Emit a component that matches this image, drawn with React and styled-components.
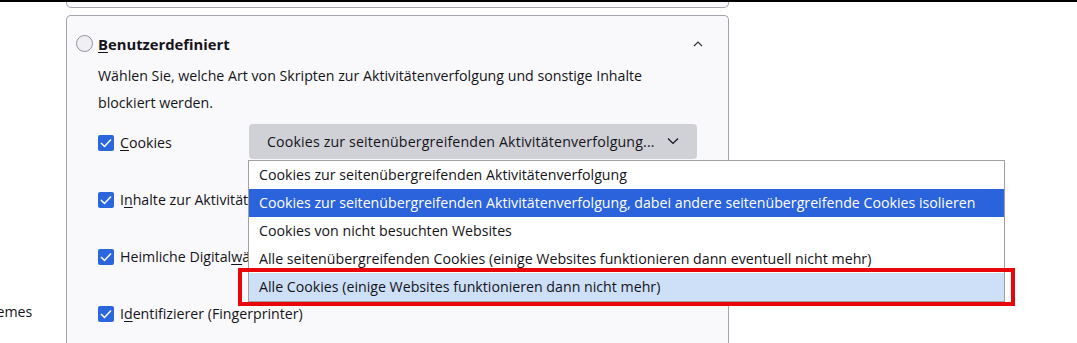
import React from 'react'
import styled, { createGlobalStyle } from 'styled-components'

const GlobalStyle = createGlobalStyle`
  html, body {
    margin: 0;
    padding: 0;
    background: #ffffff;
    overflow: hidden;
  }
  body {
    font-family: "Open Sans", "Noto Sans", sans-serif;
    color: #15141a;
    font-size: 14.2px;
  }
`

const Page = styled.div`
  width: 1077px;
  height: 343px;
  border-top: 2px solid #000;
  box-sizing: border-box;
  display: flex;
  overflow: hidden;
`

const Sidebar = styled.div`
  width: 66px;
  flex-shrink: 0;
  display: flex;
  flex-direction: column;
  justify-content: flex-end;
  padding-bottom: 21px;
  box-sizing: border-box;
`

const SideItem = styled.div`
  margin-left: -20px;
  white-space: nowrap;
  line-height: 20px;
`

const Main = styled.div`
  width: 663px;
  display: flex;
  flex-direction: column;
  gap: 7px;
`

const PrevCard = styled.div`
  height: 6px;
  border: 1px solid #a3a3ad;
  border-top: none;
  border-radius: 0 0 5px 5px;
  background: #f9f9fb;
`

const Card = styled.div`
  border: 1px solid #a3a3ad;
  border-bottom: none;
  border-radius: 5px 5px 0 0;
  background: #f9f9fb;
  padding: 16px 10px 0 9px;
  height: 400px;
`

const Header = styled.div`
  display: flex;
  align-items: center;
  height: 24px;
`

const Radio = styled.span`
  width: 15px;
  height: 15px;
  border-radius: 50%;
  border: 1px solid #8f8f9d;
  background: #f0f0f4;
  margin-right: 5px;
`

const Title = styled.div`
  flex: 1;
  font-weight: 700;
  font-size: 14.8px;
`

const Chevron = styled.svg`
  width: 12px;
  height: 12px;
  margin-right: 14px;
`

const Body = styled.div`
  padding-left: 22px;
`

const Description = styled.p`
  margin: 6px 0 0;
  line-height: 27px;
  width: 560px;
`

const Rows = styled.div`
  display: flex;
  flex-direction: column;
  gap: 22px;
  margin-top: 8px;
`

const Row = styled.div`
  display: flex;
  align-items: center;
  min-height: 35px;
`

const Check = styled.label`
  display: flex;
  align-items: center;
  gap: 6px;
  width: ${p => (p.$wide ? 'auto' : '151px')};
  flex-shrink: 0;
  white-space: nowrap;
  padding-top: 3px;
`

const Box = styled.span`
  width: 16px;
  height: 16px;
  border-radius: 2px;
  background: #2b66dc;
  display: flex;
  align-items: center;
  justify-content: center;
`

const SelectWrap = styled.div`
  position: relative;
`

const SelectButton = styled.div`
  width: 448px;
  height: 35px;
  box-sizing: border-box;
  border-radius: 4px;
  background: #d0d0d7;
  display: flex;
  align-items: center;
  padding-left: 18px;
  gap: 12px;
  white-space: nowrap;
  letter-spacing: 0.15px;
`

const Dropdown = styled.ul`
  position: absolute;
  top: 36px;
  left: -1px;
  width: 757px;
  margin: 0;
  padding: 0;
  list-style: none;
  background: #fff;
  border: 1px solid #a0a0a0;
  box-sizing: border-box;
  z-index: 2;
`

const Option = styled.li`
  position: relative;
  height: 28px;
  line-height: 28px;
  padding-left: 10px;
  white-space: nowrap;
  background: ${p => (p.$active ? '#2a63db' : p.$hover ? '#cde0f7' : 'transparent')};
  color: ${p => (p.$active ? '#fff' : '#15141a')};
`

const Marker = styled.span`
  position: absolute;
  top: -5px;
  bottom: -5px;
  left: -11px;
  right: -11px;
  border: 4px solid #e8060a;
  pointer-events: none;
`

const U = styled.span`
  text-decoration: underline;
  text-underline-offset: 2px;
`

const Tick = () => (
  <Box>
    <svg width="12" height="10" viewBox="0 0 12 10">
      <path d="M1 5 L4.5 8.5 L11 1.5" fill="none" stroke="#fff" strokeWidth="1.5" />
    </svg>
  </Box>
)

const options = [
  'Cookies zur seitenübergreifenden Aktivitätenverfolgung',
  'Cookies zur seitenübergreifenden Aktivitätenverfolgung, dabei andere seitenübergreifende Cookies isolieren',
  'Cookies von nicht besuchten Websites',
  'Alle seitenübergreifenden Cookies (einige Websites funktionieren dann eventuell nicht mehr)',
  'Alle Cookies (einige Websites funktionieren dann nicht mehr)',
]

export default function App() {
  return (
    <>
      <GlobalStyle />
      <Page>
        <Sidebar>
          <SideItem>Themes</SideItem>
        </Sidebar>
        <Main>
          <PrevCard />
          <Card>
            <Header>
              <Radio />
              <Title><U>B</U>enutzerdefiniert</Title>
              <Chevron viewBox="0 0 12 12">
                <path d="M2 8 L6 4 L10 8" fill="none" stroke="#333" strokeWidth="1.2" />
              </Chevron>
            </Header>
            <Body>
              <Description>
                Wählen Sie, welche Art von Skripten zur Aktivitätenverfolgung und sonstige Inhalte blockiert werden.
              </Description>
              <Rows>
                <Row>
                  <Check><Tick /><span><U>C</U>ookies</span></Check>
                  <SelectWrap>
                    <SelectButton>
                      Cookies zur seitenübergreifenden Aktivitätenverfolgung...
                      <svg width="12" height="8" viewBox="0 0 12 8">
                        <path d="M1 1.5 L6 6.5 L11 1.5" fill="none" stroke="#15141a" strokeWidth="1.2" />
                      </svg>
                    </SelectButton>
                    <Dropdown>
                      {options.map((o, i) => (
                        <Option key={o} $active={i === 1} $hover={i === 4}>
                          {o}
                          {i === 4 && <Marker />}
                        </Option>
                      ))}
                    </Dropdown>
                  </SelectWrap>
                </Row>
                <Row>
                  <Check $wide><Tick /><span>I<U>n</U>halte zur Aktivitätenverfolgung</span></Check>
                </Row>
                <Row>
                  <Check $wide><Tick /><span>Heimliche Digital<U>w</U>ährungsschürfer (Kryptominer)</span></Check>
                </Row>
                <Row>
                  <Check $wide><Tick /><span>I<U>d</U>entifizierer (Fingerprinter)</span></Check>
                </Row>
              </Rows>
            </Body>
          </Card>
        </Main>
      </Page>
    </>
  )
}
